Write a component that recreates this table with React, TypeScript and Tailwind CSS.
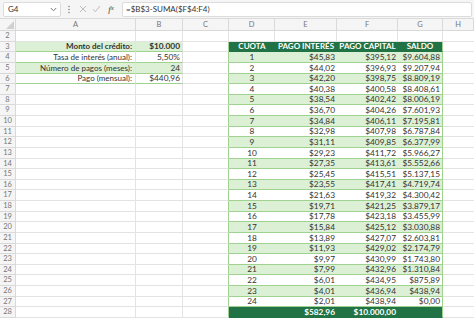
import React from "react";

const rows: [number, string, string, string][] = [
  [1, "$45,83", "$395,12", "$9.604,88"],
  [2, "$44,02", "$396,93", "$9.207,94"],
  [3, "$42,20", "$398,75", "$8.809,19"],
  [4, "$40,38", "$400,58", "$8.408,61"],
  [5, "$38,54", "$402,42", "$8.006,19"],
  [6, "$36,70", "$404,26", "$7.601,93"],
  [7, "$34,84", "$406,11", "$7.195,81"],
  [8, "$32,98", "$407,98", "$6.787,84"],
  [9, "$31,11", "$409,85", "$6.377,99"],
  [10, "$29,23", "$411,72", "$5.966,27"],
  [11, "$27,35", "$413,61", "$5.552,66"],
  [12, "$25,45", "$415,51", "$5.137,15"],
  [13, "$23,55", "$417,41", "$4.719,74"],
  [14, "$21,63", "$419,32", "$4.300,42"],
  [15, "$19,71", "$421,25", "$3.879,17"],
  [16, "$17,78", "$423,18", "$3.455,99"],
  [17, "$15,84", "$425,12", "$3.030,88"],
  [18, "$13,89", "$427,07", "$2.603,81"],
  [19, "$11,93", "$429,02", "$2.174,79"],
  [20, "$9,97", "$430,99", "$1.743,80"],
  [21, "$7,99", "$432,96", "$1.310,84"],
  [22, "$6,01", "$434,95", "$875,89"],
  [23, "$4,01", "$436,94", "$438,94"],
  [24, "$2,01", "$438,94", "$0,00"],
];

const leftRows: Record<number, [string, string, boolean, boolean]> = {
  3: ["Monto del crédito:", "$10.000", true, true],
  4: ["Tasa de interés (anual):", "5,50%", false, false],
  5: ["Número de pagos (meses):", "24", true, false],
  6: ["Pago (mensual):", "$440,96", false, false],
};

const GRID = "grid grid-cols-[16px_120px_47px_46px_46px_62px_61px_45px_1fr]";
const cell = "h-full flex items-center overflow-hidden whitespace-nowrap border-b";
const gray = "border-[#e3e3e3]";

function RowHead({ n }: { n: number }) {
  return (
    <div className={`${cell} justify-center bg-[#f5f5f5] border-r border-[#d9d9d9] text-[#777] text-[7.5px]`}>
      {n}
    </div>
  );
}

function SheetRow({ r }: { r: number }) {
  const left = leftRows[r];
  const isHeader = r === 3;
  const isTotal = r === 28;
  const dataIdx = r - 4;
  const data = r >= 4 && r <= 27 ? rows[dataIdx] : null;
  const inTable = r >= 3 && r <= 28;
  const greenRow = data ? data[0] % 2 === 1 : false;

  const tBg = isHeader || isTotal ? "bg-[#217346]" : greenRow ? "bg-[#dcf0d5]" : "bg-white";
  const tText = isHeader || isTotal ? "text-white font-bold" : "text-[#333]";
  const tBorder = isHeader || isTotal ? "border-[#217346]" : "border-[#9fd18f]";
  const tSize = isHeader ? "text-[8px]" : "text-[8.3px]";

  const lBg = left && left[2] ? "bg-[#dcf0d5]" : "bg-white";
  const lW = left && left[3] ? "font-bold" : "";

  return (
    <div className={`${GRID} h-[10.63px] text-[8px]`}>
      <RowHead n={r} />
      {/* A */}
      <div
        className={`${cell} border-r justify-end pr-[3px] ${left ? `${lBg} border-b-[#9fd18f] border-r-[#e3e3e3] ${lW}` : gray} text-[#333]`}
      >
        {left ? left[0] : ""}
      </div>
      {/* B */}
      <div
        className={`${cell} border-r justify-end pr-[2px] text-[8.3px] ${left ? `${lBg} border-b-[#9fd18f] border-r-[#e3e3e3] ${lW}` : gray} text-[#333]`}
      >
        {left ? left[1] : ""}
      </div>
      {/* C */}
      <div className={`${cell} border-r ${gray} ${inTable ? "border-r-[#9fd18f]" : ""}`} />
      {inTable ? (
        <>
          <div className={`${cell} justify-center ${tSize} ${tBg} ${tText} ${tBorder}`}>
            {isHeader ? "CUOTA" : data ? data[0] : ""}
          </div>
          <div className={`${cell} ${tSize} ${isHeader ? "justify-center" : "justify-end pr-[2px]"} ${tBg} ${tText} ${tBorder}`}>
            {isHeader ? "PAGO INTERÉS" : isTotal ? "$582,96" : data ? data[1] : ""}
          </div>
          <div className={`${cell} ${tSize} ${isHeader ? "justify-center" : "justify-end pr-[2px]"} ${tBg} ${tText} ${tBorder}`}>
            {isHeader ? "PAGO CAPITAL" : isTotal ? "$10.000,00" : data ? data[2] : ""}
          </div>
          <div
            className={`${cell} ${tSize} border-r ${isHeader ? "justify-center" : "justify-end pr-[2px]"} ${tBg} ${tText} ${tBorder} border-r-[#9fd18f]`}
          >
            {isHeader ? "SALDO" : data ? data[3] : ""}
          </div>
        </>
      ) : (
        <>
          <div className={`${cell} border-r ${gray}`} />
          <div className={`${cell} border-r ${gray}`} />
          <div className={`${cell} border-r ${gray}`} />
          <div className={`${cell} border-r ${gray}`} />
        </>
      )}
      <div className={`${cell} ${gray}`} />
    </div>
  );
}

export default function App() {
  const sheetRows = Array.from({ length: 27 }, (_, i) => i + 2);
  const cols = ["A", "B", "C", "D", "E", "F", "G", "H"];
  return (
    <div
      className="w-[474px] h-[318px] overflow-hidden bg-white text-[8px] leading-none"
      style={{ fontFamily: "Lato, 'Open Sans', sans-serif" }}
    >
      {/* formula bar */}
      <div className="h-[19px] flex items-center bg-[#f5f5f5] border-b border-[#dadada] pl-[3px] pr-[2px]">
        <div className="w-[58px] h-[15px] bg-white border border-[#dcdcdc] rounded-[2px] flex items-center justify-between pl-[4px] pr-[3px] text-[#333]">
          <span>G4</span>
          <svg width="7" height="5" viewBox="0 0 7 5">
            <path d="M0.8 1 L3.5 3.8 L6.2 1" fill="none" stroke="#777" strokeWidth="1" />
          </svg>
        </div>
        <div className="w-[10px] flex justify-center ml-[3px]">
          <svg width="2" height="9" viewBox="0 0 2 9">
            <circle cx="1" cy="1.5" r="0.8" fill="#888" />
            <circle cx="1" cy="4.5" r="0.8" fill="#888" />
            <circle cx="1" cy="7.5" r="0.8" fill="#888" />
          </svg>
        </div>
        <div className="w-[13px] flex justify-center ml-[2px]">
          <svg width="8" height="8" viewBox="0 0 8 8">
            <path d="M1 1 L7 7 M7 1 L1 7" stroke="#b5b5b5" strokeWidth="0.9" />
          </svg>
        </div>
        <div className="w-[13px] flex justify-center ml-[1px]">
          <svg width="9" height="8" viewBox="0 0 9 8">
            <path d="M1 4.2 L3.3 6.7 L8 1" fill="none" stroke="#b5b5b5" strokeWidth="0.9" />
          </svg>
        </div>
        <div className="w-[14px] flex justify-center ml-[1px] text-[#444] italic text-[9px]" style={{ fontFamily: "'Liberation Serif', serif" }}>
          f<span className="text-[7px]">x</span>
        </div>
        <div className="flex-1 ml-[4px] h-[15px] bg-white border border-[#dcdcdc] rounded-[2px] flex items-center pl-[3px] text-[#333]">
          =$B$3-SUMA($F$4:F4)
        </div>
      </div>
      {/* column headers */}
      <div className={`${GRID} h-[12px]`}>
        <div className="h-full bg-[#f5f5f5] border-r border-b border-[#d9d9d9] relative">
          <svg className="absolute right-[1px] bottom-[1px]" width="8" height="8" viewBox="0 0 8 8">
            <path d="M8 0 L8 8 L0 8 Z" fill="#d0d0d0" />
          </svg>
        </div>
        {cols.map((c) => (
          <div
            key={c}
            className="h-full flex items-center justify-center bg-[#f5f5f5] border-r border-b border-[#d9d9d9] text-[#777] text-[7.5px]"
          >
            {c}
          </div>
        ))}
      </div>
      {sheetRows.map((r) => (
        <SheetRow key={r} r={r} />
      ))}
    </div>
  );
}
